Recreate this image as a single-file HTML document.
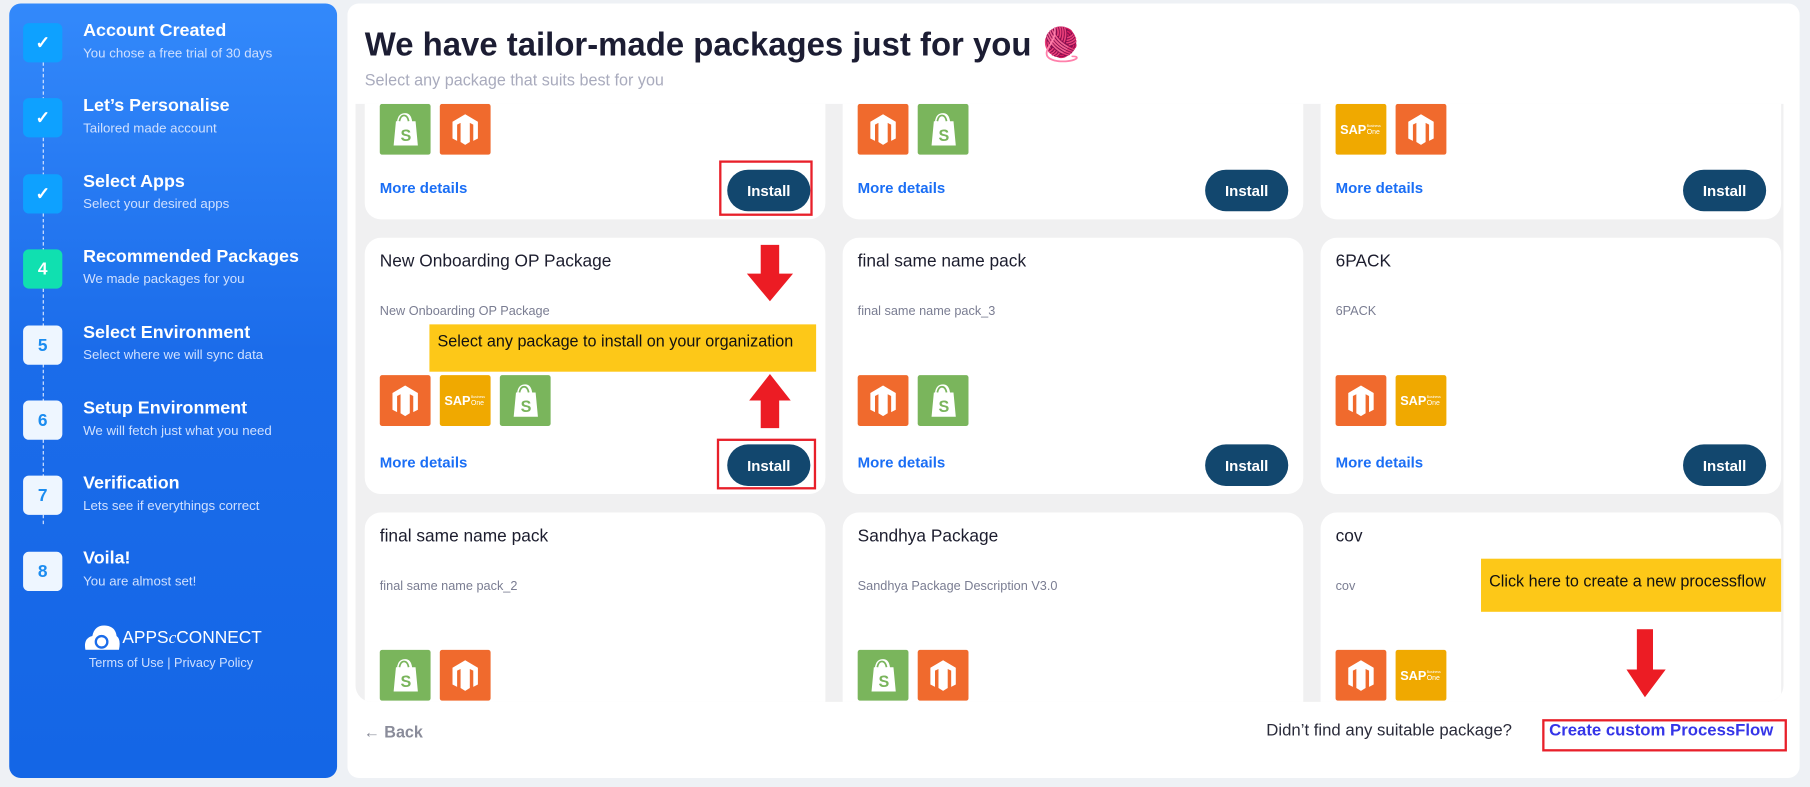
<!DOCTYPE html>
<html><head><meta charset="utf-8"><style>
*{box-sizing:border-box;margin:0;padding:0}
html,body{width:1810px;height:787px;overflow:hidden;background:#eef1f5;font-family:"Liberation Sans",sans-serif}
#w{position:absolute;left:0;top:0;width:1568px;height:682px;transform:scale(1.15434);transform-origin:0 0}
.a{position:absolute}
#side{left:8px;top:3px;width:284px;height:671px;border-radius:10px;background:linear-gradient(180deg,#3389fb 0%,#1b6cea 45%,#1466e6 100%)}
.st{position:absolute;left:12px;width:34px;height:34px;border-radius:5px;background:#0ea1ff;color:#fff;font-weight:bold;font-size:15px;display:flex;align-items:center;justify-content:center}
.st.n{background:#eef6ff;color:#1b8cf0}
.st.g{background:#10e0b0}
.tt{position:absolute;left:64px;color:#fff;font-weight:bold;font-size:15.5px}
.ts{position:absolute;left:64px;color:#cfe0ff;font-size:11.5px}
.dl{position:absolute;left:29px;width:0;border-left:1px dashed #dbe8ff}
#main{left:301px;top:3px;width:1258px;height:671px;background:#fff;border-radius:10px}
#grid{left:308px;top:90px;width:1237px;height:518px;background:#f0f0f1;overflow:hidden;border-radius:0 0 14px 14px}
.card{position:absolute;width:399px;background:#fff;border-radius:14px}
.ct{position:absolute;left:13px;top:12px;font-size:15px;color:#1c1d2e;font-weight:500}
.cd{position:absolute;left:13px;top:58px;font-size:11px;color:#7a7d92}
.ic{position:absolute;width:44px;height:44px;border-radius:2px}
.sh{background:#7ab55c}.mg{background:#f06a2d}.sp{background:#f0a900}
.md{position:absolute;left:13px;font-size:13px;color:#1a6ef5;font-weight:bold}
.ib{position:absolute;right:13px;width:72px;height:36px;border-radius:18px;background:#12476e;color:#fff;font-size:13px;font-weight:bold;display:flex;align-items:center;justify-content:center}
.rb{position:absolute;border:2px solid #e8202a}
.yb{position:absolute;background:#fdc818;color:#111;font-size:14px;padding:6px 7px}
</style></head><body><div id="w">
<svg width="0" height="0" style="position:absolute"><defs>
<symbol id="S" viewBox="0 0 44 44"><path d="M15 15 Q16 8 22 8 Q27 8 28 15 L31 15 L33 36 L12 36 L14 15 Z" fill="#fff"/><path d="M17 15 Q18 10 21 10 Q24 10 25 15" stroke="#7ab55c" stroke-width="1.5" fill="none"/><text x="18" y="32" font-family="Liberation Sans" font-weight="bold" font-size="14" fill="#7ab55c">S</text></symbol>
<symbol id="M" viewBox="0 0 44 44"><path d="M22 9 L33 15.5 L33 30 L29 32 L29 18 L26 16.5 L26 33 L22 35.5 L18 33 L18 16.5 L15 18 L15 32 L11 30 L11 15.5 Z" fill="#fff"/></symbol>
<symbol id="P" viewBox="0 0 44 44"><text x="4" y="26" font-family="Liberation Sans" font-weight="bold" font-size="11" fill="#fff">SAP</text><text x="27" y="20" font-family="Liberation Sans" font-size="3" fill="#fff">Business</text><text x="27" y="26" font-family="Liberation Sans" font-size="6" fill="#fff">One</text></symbol>
</defs></svg>
<div id="side" class="a">
<div class="dl" style="top:51px;height:400px"></div>
<div class="st" style="top:17px">✓</div><div class="tt" style="top:15px">Account Created</div><div class="ts" style="top:38px">You chose a free trial of 30 days</div>
<div class="st" style="top:82px">✓</div><div class="tt" style="top:80px">Let’s Personalise</div><div class="ts" style="top:103px">Tailored made account</div>
<div class="st" style="top:148px">✓</div><div class="tt" style="top:146px">Select Apps</div><div class="ts" style="top:168px">Select your desired apps</div>
<div class="st g" style="top:213px">4</div><div class="tt" style="top:211px">Recommended Packages</div><div class="ts" style="top:233px">We made packages for you</div>
<div class="st n" style="top:279px">5</div><div class="tt" style="top:277px">Select Environment</div><div class="ts" style="top:299px">Select where we will sync data</div>
<div class="st n" style="top:344px">6</div><div class="tt" style="top:342px">Setup Environment</div><div class="ts" style="top:365px">We will fetch just what you need</div>
<div class="st n" style="top:409px">7</div><div class="tt" style="top:407px">Verification</div><div class="ts" style="top:430px">Lets see if everythings correct</div>
<div class="st n" style="top:475px">8</div><div class="tt" style="top:472px">Voila!</div><div class="ts" style="top:495px">You are almost set!</div>
<svg class="a" style="left:64px;top:536px" width="32" height="24" viewBox="0 0 32 24"><path d="M2 24 Q0 14 8 12 Q10 2 20 3 Q28 4 29 12 Q33 15 31 24 Z" fill="#fff"/><circle cx="16" cy="17" r="5" fill="none" stroke="#1b6cea" stroke-width="2"/></svg>
<div class="a" style="left:98px;top:541px;color:#fff;font-size:15px">APPS<i style="font-family:'Liberation Serif'">c</i>CONNECT</div>
<div class="a" style="left:69px;top:566px;color:#cfe0ff;font-size:11px">Terms of Use | Privacy Policy</div>
</div>
<div id="main" class="a"></div>
<div class="a" style="left:316px;top:22px;font-size:28.5px;font-weight:bold;color:#1c1d33">We have tailor-made packages just for you <span style="color:#b0367a">🧶</span></div>
<div class="a" style="left:316px;top:61px;font-size:14px;color:#a9abbd">Select any package that suits best for you</div>
<div id="grid" class="a">
<div class="card" style="left:8px;top:-40px;height:140px"><div class="ic sh" style="left:13px;top:40px"><svg width="44" height="44"><use href="#S"/></svg></div><div class="ic mg" style="left:65px;top:40px"><svg width="44" height="44"><use href="#M"/></svg></div><div class="md" style="top:105px">More details</div><div class="ib" style="top:97px">Install</div></div>
<div class="card" style="left:422px;top:-40px;height:140px"><div class="ic mg" style="left:13px;top:40px"><svg width="44" height="44"><use href="#M"/></svg></div><div class="ic sh" style="left:65px;top:40px"><svg width="44" height="44"><use href="#S"/></svg></div><div class="md" style="top:105px">More details</div><div class="ib" style="top:97px">Install</div></div>
<div class="card" style="left:836px;top:-40px;height:140px"><div class="ic sp" style="left:13px;top:40px"><svg width="44" height="44"><use href="#P"/></svg></div><div class="ic mg" style="left:65px;top:40px"><svg width="44" height="44"><use href="#M"/></svg></div><div class="md" style="top:105px">More details</div><div class="ib" style="top:97px">Install</div></div>
<div class="card" style="left:8px;top:116px;height:222px"><div class="ct">New Onboarding OP Package</div><div class="cd">New Onboarding OP Package</div><div class="ic mg" style="left:13px;top:119px"><svg width="44" height="44"><use href="#M"/></svg></div><div class="ic sp" style="left:65px;top:119px"><svg width="44" height="44"><use href="#P"/></svg></div><div class="ic sh" style="left:117px;top:119px"><svg width="44" height="44"><use href="#S"/></svg></div><div class="md" style="top:187px">More details</div><div class="ib" style="top:179px">Install</div></div>
<div class="card" style="left:422px;top:116px;height:222px"><div class="ct">final same name pack</div><div class="cd">final same name pack_3</div><div class="ic mg" style="left:13px;top:119px"><svg width="44" height="44"><use href="#M"/></svg></div><div class="ic sh" style="left:65px;top:119px"><svg width="44" height="44"><use href="#S"/></svg></div><div class="md" style="top:187px">More details</div><div class="ib" style="top:179px">Install</div></div>
<div class="card" style="left:836px;top:116px;height:222px"><div class="ct">6PACK</div><div class="cd">6PACK</div><div class="ic mg" style="left:13px;top:119px"><svg width="44" height="44"><use href="#M"/></svg></div><div class="ic sp" style="left:65px;top:119px"><svg width="44" height="44"><use href="#P"/></svg></div><div class="md" style="top:187px">More details</div><div class="ib" style="top:179px">Install</div></div>
<div class="card" style="left:8px;top:354px;height:220px"><div class="ct">final same name pack</div><div class="cd" style="top:58px">final same name pack_2</div><div class="ic sh" style="left:13px;top:119px"><svg width="44" height="44"><use href="#S"/></svg></div><div class="ic mg" style="left:65px;top:119px"><svg width="44" height="44"><use href="#M"/></svg></div></div>
<div class="card" style="left:422px;top:354px;height:220px"><div class="ct">Sandhya Package</div><div class="cd">Sandhya Package Description V3.0</div><div class="ic sh" style="left:13px;top:119px"><svg width="44" height="44"><use href="#S"/></svg></div><div class="ic mg" style="left:65px;top:119px"><svg width="44" height="44"><use href="#M"/></svg></div></div>
<div class="card" style="left:836px;top:354px;height:220px"><div class="ct">cov</div><div class="cd">cov</div><div class="ic mg" style="left:13px;top:119px"><svg width="44" height="44"><use href="#M"/></svg></div><div class="ic sp" style="left:65px;top:119px"><svg width="44" height="44"><use href="#P"/></svg></div></div>
</div>
<div class="rb" style="left:623px;top:139px;width:81px;height:48px"></div>
<div class="rb" style="left:621px;top:380px;width:86px;height:44px"></div>
<div class="yb" style="left:372px;top:281px;width:335px;height:41px">Select any package to install on your organization</div>
<svg class="a" style="left:646px;top:212px" width="42" height="50"><path d="M13 0 H29 V25 H41 L21 49 L1 25 H13 Z" fill="#ec1c24"/></svg>
<svg class="a" style="left:648px;top:324px" width="38" height="47"><path d="M19 0 L37 23 H27 V47 H11 V23 H1 Z" fill="#ec1c24"/></svg>
<div class="yb" style="left:1283px;top:484px;width:260px;height:46px;padding-top:11px">Click here to create a new processflow</div>
<svg class="a" style="left:1408px;top:545px" width="36" height="60"><path d="M10 0 H24 V35 H35 L17 59 L1 35 H10 Z" fill="#ec1c24"/></svg>
<div class="a" style="left:315px;top:626px;font-size:14px;color:#8a8c9a;font-weight:bold">← Back</div>
<div class="a" style="left:1097px;top:625px;font-size:14.5px;color:#2a2b3a">Didn’t find any suitable package?</div>
<div class="rb" style="left:1336px;top:623px;width:212px;height:28px"></div>
<div class="a" style="left:1342px;top:625px;font-size:14.5px;color:#3535e8;font-weight:bold">Create custom ProcessFlow</div>
</div></body></html>
